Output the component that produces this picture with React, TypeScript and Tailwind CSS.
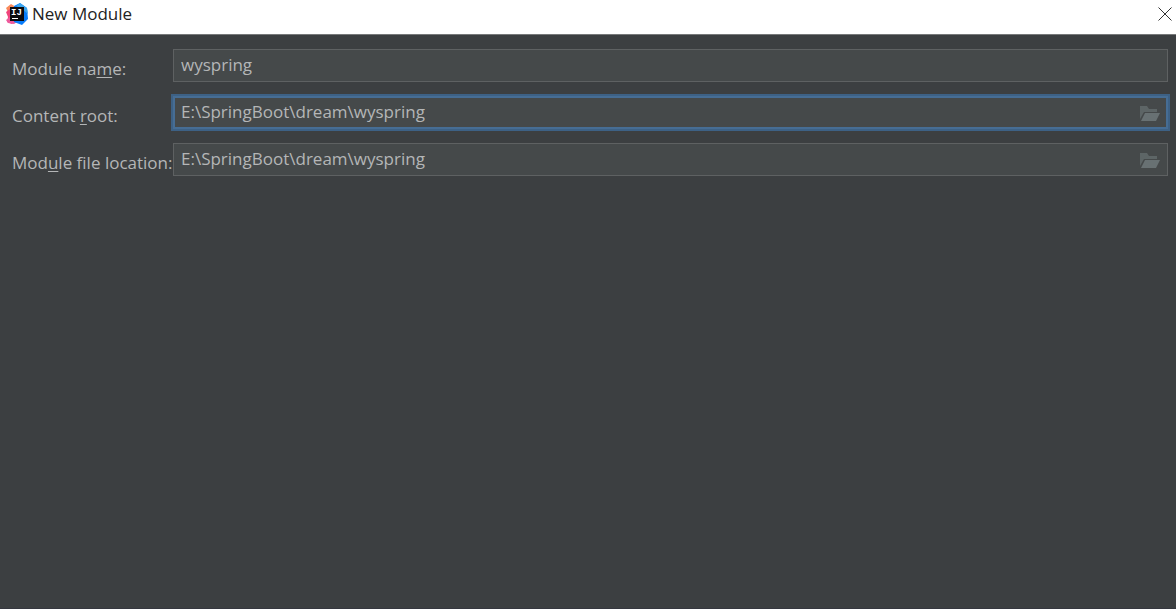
import type { ReactNode } from "react";
import clsx from "clsx";

type PathFieldProps = {
  id: string;
  label: ReactNode;
  value: string;
  browsable?: boolean;
  focused?: boolean;
};

function IdeaLogo() {
  return (
    <svg viewBox="0 0 22 22" className="size-[22px] shrink-0" aria-hidden="true">
      <path d="M0 5 5 1l5 3v9l-4 4-4-2 1-4z" fill="#f98a5b" />
      <path d="M0 9 4 6l5 2v10l-3 3-5-2 1-5z" fill="#f0437c" />
      <path d="M0 17 4 14h10l-3 5-3 2-6-1z" fill="#ee5a9c" />
      <path d="M8 3 14 0l7 5 1 11-6 6-8-3z" fill="#087cfa" />
      <path d="m14 0 7 5 1 6-6-5-6-3z" fill="#3aa5ee" />
      <rect x="4" y="4" width="14" height="14" fill="#0b0b0f" />
      <text x="5" y="12" fontFamily="Liberation Mono, monospace" fontSize="9" fontWeight="700" fill="#fff">
        IJ
      </text>
      <rect x="6" y="15" width="6" height="1" fill="#fff" />
    </svg>
  );
}

function CloseIcon() {
  return (
    <svg viewBox="0 0 14 14" className="size-[14px]" aria-hidden="true">
      <path d="M.5.5l13 13M13.5.5l-13 13" stroke="#333" strokeWidth="1" fill="none" />
    </svg>
  );
}

function FolderIcon() {
  return (
    <svg viewBox="0 0 20 15" className="h-[15px] w-5" aria-hidden="true">
      <path d="M0 0h7l2 3h8v3H4L0 13z" fill="#5d6566" />
      <path d="M5 7h15l-4 8H1z" fill="#687173" />
    </svg>
  );
}

function Mnemonic({ children }: { children: ReactNode }) {
  return <u className="decoration-1 underline-offset-2">{children}</u>;
}

function PathField({ id, label, value, browsable, focused }: PathFieldProps) {
  return (
    <div className="flex items-center">
      <label htmlFor={id} className="w-[161px] shrink-0 pt-[7px] text-[17px] leading-6 whitespace-nowrap">
        {label}
      </label>
      <div
        className={clsx(
          "flex h-[33px] min-w-0 flex-1 items-center bg-[#45494a] pb-px",
          focused ? "border-2 border-[#466d94] px-[6px] ring-2 ring-[#3d6185]" : "border border-[#5e6162] px-[7px]"
        )}
      >
        <input
          id={id}
          type="text"
          defaultValue={value}
          spellCheck={false}
          className="min-w-0 flex-1 bg-transparent text-[17px] leading-6 outline-none"
        />
        {browsable ? (
          <button type="button" aria-label="Browse" className="flex pt-[3px]">
            <FolderIcon />
          </button>
        ) : null}
      </div>
    </div>
  );
}

export default function App() {
  return (
    <div className="flex min-h-screen flex-col border-b border-[#35373f] bg-[#3c3f41] font-['Open_Sans',sans-serif] text-[#b4b6b7]">
      <header className="flex h-[35px] items-center justify-between border-b border-[#77797a] bg-white pr-1 pb-[7px] pl-[6px]">
        <div className="flex items-center gap-1">
          <IdeaLogo />
          <h1 className="text-[17px] leading-6 text-[#222]">New Module</h1>
        </div>
        <button type="button" aria-label="Close">
          <CloseIcon />
        </button>
      </header>

      <form className="flex flex-col gap-[14px] pt-[14px] pr-2 pl-3">
        <PathField
          id="module-name"
          label={
            <>
              Module na<Mnemonic>m</Mnemonic>e:
            </>
          }
          value="wyspring"
        />
        <PathField
          id="content-root"
          label={
            <>
              Content <Mnemonic>r</Mnemonic>oot:
            </>
          }
          value="E:\SpringBoot\dream\wyspring"
          browsable
          focused
        />
        <PathField
          id="module-file-location"
          label={
            <>
              Mod<Mnemonic>u</Mnemonic>le file location:
            </>
          }
          value="E:\SpringBoot\dream\wyspring"
          browsable
        />
      </form>
    </div>
  );
}
